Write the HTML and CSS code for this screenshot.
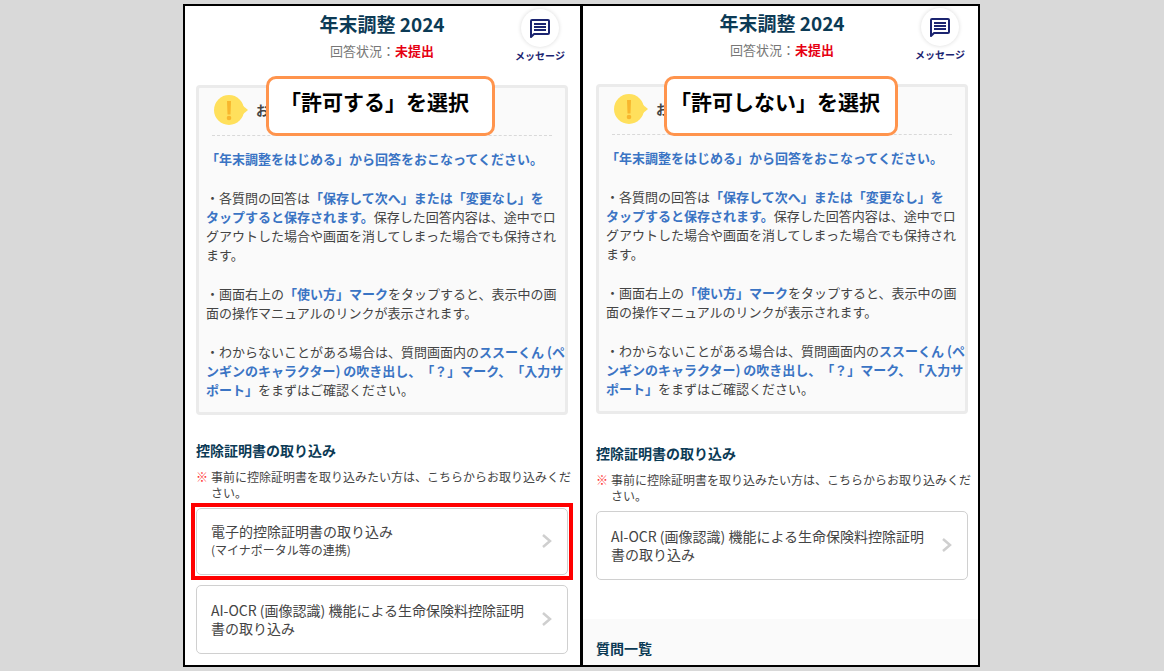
FILE: index.html
```html
<!DOCTYPE html>
<html lang="ja">
<head>
    <meta charset="UTF-8">
    <meta name="viewport" content="width=device-width, initial-scale=1.0">
    <title>年末調整 2024</title>
    <link rel="stylesheet" href="styles.css">
</head>
<body>
    <main class="compare">

        <!-- 許可する -->
        <section class="panel panel-allow">
            <header class="panel-header">
                <div class="panel-title">
                    <h1>年末調整 2024</h1>
                    <p class="status">回答状況：<strong>未提出</strong></p>
                </div>
                <button type="button" class="message">
                    <span class="message-icon">
                        <svg width="24" height="24" viewBox="0 0 24 24" fill="none" stroke="#1b2470">
                            <path d="M3 21V5Q3 4 4 4H20Q21 4 21 5V17Q21 18 20 18H6Z" stroke-width="2" stroke-linejoin="round"/>
                            <path d="M6 8H18M6 11H18M6 14H18" stroke-width="2"/>
                        </svg>
                    </span>
                    <span class="message-label">メッセージ</span>
                </button>
            </header>

            <div class="notice">
                <div class="notice-head">
                    <svg width="34" height="30" viewBox="0 0 34 30">
                        <circle cx="15" cy="15" r="15" fill="#ffe05c"/>
                        <path d="M28 10L34 15L28 20Z" fill="#ffe05c"/>
                        <path d="M13 6H17L16.500 19.500H13.500Z" fill="#f8b62d"/>
                        <circle cx="15" cy="23" r="2.300" fill="#f8b62d"/>
                    </svg>
                    <h2>お知らせ</h2>
                </div>
                <div class="notice-body">
                    <p><b>「年末調整をはじめる」から回答をおこなってください。</b></p>
                    <p>・各質問の回答は<b>「保存して次へ」または「変更なし」を<br>タップすると保存されます。</b>保存した回答内容は、途中でロ<br>グアウトした場合や画面を消してしまった場合でも保持され<br>ます。</p>
                    <p>・画面右上の<b>「使い方」マーク</b>をタップすると、表示中の画<br>面の操作マニュアルのリンクが表示されます。</p>
                    <p>・わからないことがある場合は、質問画面内の<b>ススーくん (ペ<br>ンギンのキャラクター) の吹き出し、「？」マーク、「入力サ<br>ポート」</b>をまずはご確認ください。</p>
                </div>
            </div>

            <div class="import">
                <h2>控除証明書の取り込み</h2>
                <p class="note"><span class="mark">※</span><span>事前に控除証明書を取り込みたい方は、こちらからお取り込みくだ<br>さい。</span></p>
                <div class="cards">
                    <div class="highlight">
                        <button type="button" class="card card-short">
                            <span>電子的控除証明書の取り込み<br><small>(マイナポータル等の連携)</small></span>
                            <svg width="10" height="16" viewBox="0 0 10 16" fill="none" stroke="#cfcfcf" stroke-width="2.500"><path d="M1 2L8 8L1 14"/></svg>
                        </button>
                    </div>
                    <button type="button" class="card">
                        <span>AI-OCR (画像認識) 機能による生命保険料控除証明<br>書の取り込み</span>
                        <svg width="10" height="16" viewBox="0 0 10 16" fill="none" stroke="#cfcfcf" stroke-width="2.500"><path d="M1 2L8 8L1 14"/></svg>
                    </button>
                </div>
            </div>

            <div class="callout callout-allow">「許可する」を選択</div>
        </section>

        <!-- 許可しない -->
        <section class="panel panel-deny">
            <header class="panel-header">
                <div class="panel-title">
                    <h1>年末調整 2024</h1>
                    <p class="status">回答状況：<strong>未提出</strong></p>
                </div>
                <button type="button" class="message">
                    <span class="message-icon">
                        <svg width="24" height="24" viewBox="0 0 24 24" fill="none" stroke="#1b2470">
                            <path d="M3 21V5Q3 4 4 4H20Q21 4 21 5V17Q21 18 20 18H6Z" stroke-width="2" stroke-linejoin="round"/>
                            <path d="M6 8H18M6 11H18M6 14H18" stroke-width="2"/>
                        </svg>
                    </span>
                    <span class="message-label">メッセージ</span>
                </button>
            </header>

            <div class="notice">
                <div class="notice-head">
                    <svg width="34" height="30" viewBox="0 0 34 30">
                        <circle cx="15" cy="15" r="15" fill="#ffe05c"/>
                        <path d="M28 10L34 15L28 20Z" fill="#ffe05c"/>
                        <path d="M13 6H17L16.500 19.500H13.500Z" fill="#f8b62d"/>
                        <circle cx="15" cy="23" r="2.300" fill="#f8b62d"/>
                    </svg>
                    <h2>お知らせ</h2>
                </div>
                <div class="notice-body">
                    <p><b>「年末調整をはじめる」から回答をおこなってください。</b></p>
                    <p>・各質問の回答は<b>「保存して次へ」または「変更なし」を<br>タップすると保存されます。</b>保存した回答内容は、途中でロ<br>グアウトした場合や画面を消してしまった場合でも保持され<br>ます。</p>
                    <p>・画面右上の<b>「使い方」マーク</b>をタップすると、表示中の画<br>面の操作マニュアルのリンクが表示されます。</p>
                    <p>・わからないことがある場合は、質問画面内の<b>ススーくん (ペ<br>ンギンのキャラクター) の吹き出し、「？」マーク、「入力サ<br>ポート」</b>をまずはご確認ください。</p>
                </div>
            </div>

            <div class="import">
                <h2>控除証明書の取り込み</h2>
                <p class="note"><span class="mark">※</span><span>事前に控除証明書を取り込みたい方は、こちらからお取り込みくだ<br>さい。</span></p>
                <div class="cards">
                    <button type="button" class="card">
                        <span>AI-OCR (画像認識) 機能による生命保険料控除証明<br>書の取り込み</span>
                        <svg width="10" height="16" viewBox="0 0 10 16" fill="none" stroke="#cfcfcf" stroke-width="2.500"><path d="M1 2L8 8L1 14"/></svg>
                    </button>
                </div>
            </div>

            <div class="questions">
                <h2>質問一覧</h2>
            </div>

            <div class="callout callout-deny">「許可しない」を選択</div>
        </section>

    </main>
</body>
</html>
```
FILE: styles.css
```css
* {
    box-sizing: border-box;
}
body {
    margin: 0;
    padding: 4px 1px 4px 0;
    background-color: #d9d9d9;
    color: #444;
    font-family: "Noto Sans CJK JP", sans-serif;
    font-size: 13px;
    text-spacing-trim: space-all;
}
h1, h2, p {
    margin: 0;
}
button {
    padding: 0;
    border: none;
    background: none;
    color: inherit;
    font-family: inherit;
    cursor: pointer;
}

/* two phone screens side by side */
.compare {
    display: grid;
    grid-template-columns: 1fr 3px 1fr;
    max-width: 797px;
    margin: 0 auto;
    border: 2px solid #000;
    background-color: #000;
}
.panel {
    position: relative;
    display: flex;
    flex-direction: column;
    min-width: 0;
    background-color: #fff;
}
.panel-allow {
    padding: 3px 12px 11px 11px;
}
.panel-deny {
    grid-column: 3;
    padding: 2px 10px 0 13px;
}

/* header */
.panel-header {
    display: grid;
    grid-template-columns: 50px 1fr 50px;
    padding: 0 3px;
    margin-bottom: 23px;
}
.panel-title {
    grid-column: 2;
    padding-top: 2px;
    text-align: center;
}
h1 {
    margin-bottom: 4px;
    color: #0b3a55;
    font-size: 19px;
    line-height: 26px;
}
.status {
    color: #777;
    line-height: 20px;
}
.status strong {
    color: #e60012;
}
.message {
    display: flex;
    flex-direction: column;
    align-items: center;
    gap: 3px;
    color: #1b2470;
}
.message-icon {
    display: grid;
    place-items: center;
    width: 38px;
    height: 38px;
    border-radius: 50%;
    background-color: #fff;
    box-shadow: 0 0 4px rgba(0, 0, 0, 0.15);
}
.message-label {
    font-size: 10px;
    font-weight: bold;
    line-height: 12px;
    white-space: nowrap;
}

/* notice */
.notice {
    padding: 7px 13px;
    border: 3px solid #ebebeb;
    border-radius: 4px;
    background-color: #fafafa;
}
.notice-head {
    display: flex;
    align-items: center;
    gap: 8px;
    padding: 0 0 10px 2px;
    margin-bottom: 13px;
    border-bottom: 1px dashed #d9d9d9;
}
.notice-head h2 {
    font-size: 13px;
    line-height: 20px;
}
.notice-body {
    display: flex;
    flex-direction: column;
    gap: 20px;
    margin: 0 -6px 6px;
    line-height: 19px;
    white-space: nowrap;
}
.notice-body b {
    color: #3a74c4;
}

/* import list */
.import {
    margin-top: 25px;
}
.panel-deny .import {
    margin-top: 29px;
}
.import h2,
.questions h2 {
    color: #0b3a55;
    font-size: 14px;
    line-height: 20px;
}
.note {
    display: flex;
    gap: 3px;
    margin: 9px 0 7px;
    font-size: 12px;
    line-height: 16px;
    white-space: nowrap;
}
.mark {
    color: #f33;
}
.cards {
    display: flex;
    flex-direction: column;
    gap: 10px;
}
.card {
    display: flex;
    align-items: center;
    justify-content: space-between;
    width: 100%;
    min-height: 69px;
    padding: 0 15px 2px 14px;
    border: 1px solid #d0d0d0;
    border-radius: 5px;
    background-color: #fff;
    font-size: 14px;
    line-height: 18px;
    text-align: left;
}
.card-short {
    min-height: 67px;
}
.card small {
    font-size: 12px;
}
.highlight {
    position: relative;
}
.highlight::after {
    content: "";
    position: absolute;
    inset: -5px;
    border: 4px solid #f00;
    pointer-events: none;
}

.questions {
    flex: 1;
    margin: 39px -10px 0 -13px;
    padding: 19px 13px 7px;
    background-color: #fafafa;
}

/* callouts over the screens */
.callout {
    position: absolute;
    top: 70px;
    height: 60px;
    padding: 7px 12px 0 0;
    border: 3px solid #ff944d;
    border-radius: 10px;
    background-color: #fff;
    color: #000;
    font-size: 21px;
    font-weight: bold;
    line-height: 30px;
    text-align: center;
    white-space: nowrap;
}
.callout-allow {
    left: 81px;
    width: 229px;
}
.callout-deny {
    left: 81px;
    width: 234px;
}
```
